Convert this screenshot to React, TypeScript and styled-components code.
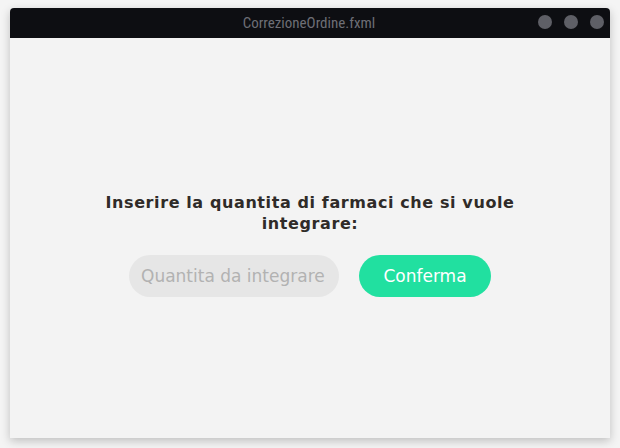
import { FC } from 'react'
import styled, { createGlobalStyle } from 'styled-components'

const GlobalStyle = createGlobalStyle`
  html, body {
    margin: 0;
    padding: 0;
    background: #f4f4f4;
  }
  body {
    width: 620px;
    height: 448px;
    overflow: hidden;
  }
`

const Page = styled.div`
  width: 620px;
  height: 448px;
  padding: 8px 10px 10px 10px;
  box-sizing: border-box;
`

const Window = styled.div`
  width: 600px;
  height: 430px;
  display: flex;
  flex-direction: column;
  background: #f3f3f3;
  border-radius: 4px 4px 0 0;
  box-shadow: 0 3px 10px rgba(0, 0, 0, 0.22);
  overflow: hidden;
`

const TitleBar = styled.div`
  height: 30px;
  flex: none;
  position: relative;
  display: flex;
  align-items: center;
  justify-content: center;
  background: #0d0e12;
`

const Title = styled.span`
  font-family: 'Liberation Sans Narrow', 'Roboto Condensed', Roboto, sans-serif;
  font-size: 15px;
  color: #6e6f76;
  padding-right: 2px;
`

const Controls = styled.div`
  position: absolute;
  right: 6px;
  top: 7px;
  display: flex;
  gap: 12px;
`

const Dot = styled.span`
  width: 14px;
  height: 14px;
  border-radius: 50%;
  background: #5e5f66;
`

const Content = styled.div`
  flex: 1;
  display: flex;
  flex-direction: column;
  align-items: center;
  justify-content: center;
  gap: 21px;
  padding-top: 12px;
`

const Heading = styled.div`
  width: 440px;
  text-align: center;
  font-family: 'DejaVu Sans', sans-serif;
  font-weight: bold;
  font-size: 16px;
  line-height: 21px;
  letter-spacing: 0.6px;
  color: #2f2b28;
`

const Row = styled.div`
  display: flex;
  gap: 20px;
  align-items: center;
`

const QuantityInput = styled.input`
  width: 210px;
  height: 42px;
  box-sizing: border-box;
  border: none;
  outline: none;
  border-radius: 21px;
  background: #e6e6e6;
  padding: 0 12px;
  font-family: 'DejaVu Sans', sans-serif;
  font-size: 17px;
  color: #333;
  &::placeholder {
    color: #b2b2b2;
  }
`

const ConfirmButton = styled.button`
  width: 132px;
  height: 42px;
  border: none;
  border-radius: 21px;
  background: #21e0a0;
  color: #ffffff;
  font-family: 'DejaVu Sans', sans-serif;
  font-size: 17px;
  cursor: pointer;
`

const App: FC = () => (
  <>
    <GlobalStyle />
    <Page>
      <Window>
        <TitleBar>
          <Title>CorrezioneOrdine.fxml</Title>
          <Controls>
            <Dot />
            <Dot />
            <Dot />
          </Controls>
        </TitleBar>
        <Content>
          <Heading>Inserire la quantita di farmaci che si vuole integrare:</Heading>
          <Row>
            <QuantityInput placeholder="Quantita da integrare" />
            <ConfirmButton>Conferma</ConfirmButton>
          </Row>
        </Content>
      </Window>
    </Page>
  </>
)

export default App
